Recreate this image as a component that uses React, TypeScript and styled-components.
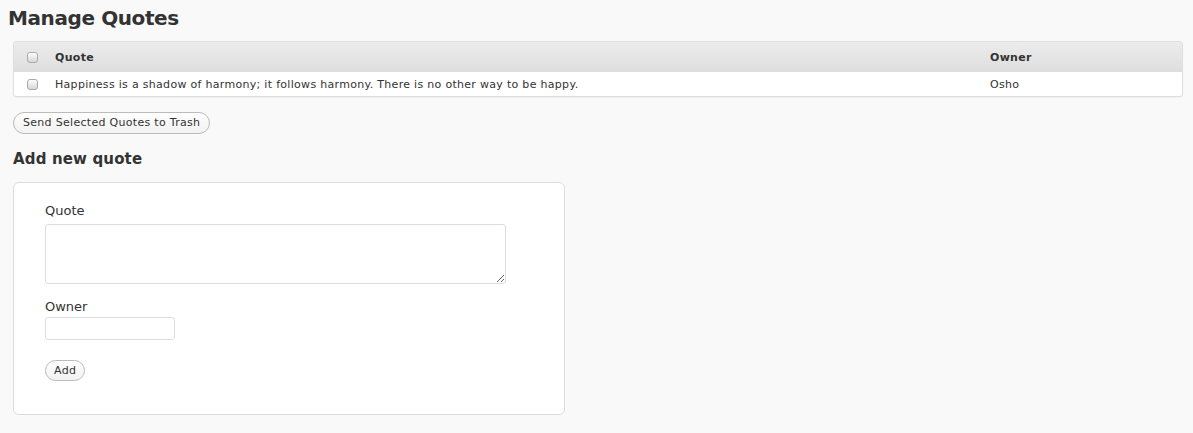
import React from 'react';
import styled, { createGlobalStyle } from 'styled-components';

const GlobalStyle = createGlobalStyle`
  html, body {
    margin: 0;
    padding: 0;
    background: #f9f9f9;
    color: #333;
    font-family: "DejaVu Sans", "Liberation Sans", sans-serif;
  }
`;

const Page = styled.div`
  padding: 0 10px 0 13px;
`;

const Title = styled.h2`
  margin: 0 0 0 -5px;
  padding-top: 5px;
  font-size: 20px;
  line-height: 26px;
  font-weight: bold;
  letter-spacing: -0.4px;
  color: #333;
`;

const TableWrap = styled.div`
  margin-top: 10px;
  border: 1px solid #dfdfdf;
  border-radius: 3px;
  background: #fff;
  box-shadow: 0 1px 1px rgba(0, 0, 0, 0.04);
  overflow: hidden;
`;

const Table = styled.table`
  width: 100%;
  border-collapse: collapse;
  table-layout: fixed;
  font-size: 11px;
  letter-spacing: 0.3px;
`;

const HeadRow = styled.tr`
  height: 30px;
  background: linear-gradient(to bottom, #ececec, #dedede);
`;

const Th = styled.th<{ $w?: number; $check?: boolean }>`
  width: ${(p) => (p.$w ? `${p.$w}px` : 'auto')};
  padding: ${(p) => (p.$check ? '0 0 0 13px' : '0 8px')};
  text-align: left;
  font-weight: bold;
  color: #333;
  vertical-align: middle;
`;

const BodyRow = styled.tr`
  height: 24px;
`;

const Td = styled.td<{ $check?: boolean }>`
  padding: ${(p) => (p.$check ? '0 0 0 13px' : '0 8px')};
  color: #333;
  vertical-align: middle;
`;

const Check = styled.input.attrs({ type: 'checkbox' })`
  appearance: none;
  display: block;
  margin: 0;
  width: 11px;
  height: 11px;
  border: 1px solid #aaa;
  border-radius: 3px;
  background: linear-gradient(to bottom, #fdfdfd, #d6d6d6);
  box-shadow: inset 0 1px 0 #fff;
`;

const PillButton = styled.button`
  display: inline-flex;
  align-items: center;
  height: 22px;
  padding: 0 9px;
  border: 1px solid #bbb;
  border-radius: 11px;
  background: linear-gradient(to bottom, #fefefe, #f2f2f2);
  font-family: inherit;
  font-size: 11px;
  letter-spacing: 0.3px;
  color: #333;
  cursor: pointer;
`;

const Actions = styled.div`
  margin-top: 14px;
`;

const SubTitle = styled.h3`
  margin: 15px 0 0;
  font-size: 15px;
  line-height: 20px;
  font-weight: bold;
  letter-spacing: 0.15px;
  color: #333;
`;

const FormBox = styled.form`
  margin-top: 13px;
  width: 552px;
  box-sizing: border-box;
  padding: 20px 31px 33px;
  border: 1px solid #dcdcdc;
  border-radius: 6px;
  background: #fff;
  display: flex;
  flex-direction: column;
  align-items: flex-start;
`;

const Label = styled.label`
  font-size: 13px;
  line-height: 16px;
  color: #333;
`;

const Field = styled.div<{ $gap: number; $after: number }>`
  display: flex;
  flex-direction: column;
  gap: ${(p) => p.$gap}px;
  margin-bottom: ${(p) => p.$after}px;
`;

const TextArea = styled.textarea`
  width: 461px;
  height: 60px;
  box-sizing: border-box;
  border: 1px solid #dddddd;
  border-radius: 3px;
  background: #fff;
  margin: 0;
`;

const TextInput = styled.input`
  width: 130px;
  height: 23px;
  box-sizing: border-box;
  border: 1px solid #dddddd;
  border-radius: 3px;
  background: #fff;
  margin: 0;
`;

const AddButton = styled(PillButton)`
  height: 21px;
  padding: 0 8px;
`;

const quotes = [
  {
    id: 1,
    text: 'Happiness is a shadow of harmony; it follows harmony. There is no other way to be happy.',
    owner: 'Osho',
  },
];

const App = () => {
  return (
    <Page>
      <GlobalStyle />
      <Title>Manage Quotes</Title>
      <TableWrap>
        <Table>
          <thead>
            <HeadRow>
              <Th $w={20} $check>
                <Check />
              </Th>
              <Th>Quote</Th>
              <Th $w={184}>Owner</Th>
            </HeadRow>
          </thead>
          <tbody>
            {quotes.map((q) => (
              <BodyRow key={q.id}>
                <Td $check>
                  <Check />
                </Td>
                <Td>{q.text}</Td>
                <Td>{q.owner}</Td>
              </BodyRow>
            ))}
          </tbody>
        </Table>
      </TableWrap>
      <Actions>
        <PillButton type="button">Send Selected Quotes to Trash</PillButton>
      </Actions>
      <SubTitle>Add new quote</SubTitle>
      <FormBox onSubmit={(e) => e.preventDefault()}>
        <Field $gap={5} $after={15}>
          <Label>Quote</Label>
          <TextArea />
        </Field>
        <Field $gap={2} $after={20}>
          <Label>Owner</Label>
          <TextInput type="text" />
        </Field>
        <AddButton type="submit">Add</AddButton>
      </FormBox>
    </Page>
  );
};

export default App;
